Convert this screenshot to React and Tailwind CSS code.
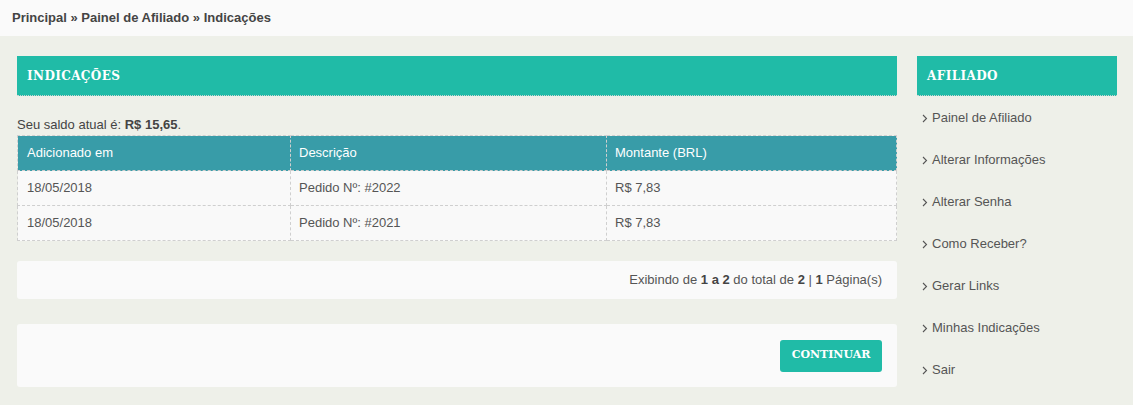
import React from "react";

const slab = { fontFamily: '"DejaVu Serif", serif', fontWeight: 700 };

const rows = [
    { date: "18/05/2018", desc: "Pedido Nº: #2022", amount: "R$ 7,83" },
    { date: "18/05/2018", desc: "Pedido Nº: #2021", amount: "R$ 7,83" },
];

const links = [
    "Painel de Afiliado",
    "Alterar Informações",
    "Alterar Senha",
    "Como Receber?",
    "Gerar Links",
    "Minhas Indicações",
    "Sair",
];

const Chevron = () => (
    <svg width="6" height="9" viewBox="0 0 6 9" className="mr-[4px] shrink-0">
        <path d="M1 1l3.5 3.5L1 8" fill="none" stroke="#555" strokeWidth="1.1" />
    </svg>
);

const PanelTitle = ({ children }) => (
    <div className="h-[40px] bg-[#20bba7] border-b border-dotted border-[#c9d4d2] flex items-center px-[10px]">
        <h2 className="text-white text-[12px] tracking-[0.4px] pt-[1px]" style={slab}>
            {children}
        </h2>
    </div>
);

export default function App() {
    return (
        <div
            className="min-h-[405px] bg-[#eef0e9] text-[#444] text-[13px]"
            style={{ fontFamily: '"Liberation Sans", Arial, sans-serif' }}
        >
            {/* Breadcrumb */}
            <div className="h-[36px] bg-[#fafafa] flex items-center px-[12px] font-bold text-[#444]">
                Principal » Painel de Afiliado » Indicações
            </div>

            <div className="flex gap-[20px] pl-[17px] pr-[16px] pt-[20px]">
                {/* Main column */}
                <div className="w-[880px] shrink-0">
                    <PanelTitle>INDICAÇÕES</PanelTitle>

                    <p className="mt-[21px] leading-[16px]">
                        Seu saldo atual é: <b>R$ 15,65</b>.
                    </p>

                    <table className="w-full border-collapse mt-[2px]">
                        <thead>
                            <tr className="bg-[#389ca8] text-white h-[35px]">
                                <th className="w-[273px] text-left font-normal px-[9px] border border-dashed border-[#cfcfcf]">Adicionado em</th>
                                <th className="w-[316px] text-left font-normal px-[8px] border border-dashed border-[#cfcfcf]">Descrição</th>
                                <th className="text-left font-normal px-[8px] border border-dashed border-[#cfcfcf]">Montante (BRL)</th>
                            </tr>
                        </thead>
                        <tbody>
                            {rows.map((r) => (
                                <tr key={r.desc} className="bg-[#f9f9f9] h-[35px] text-[#555]">
                                    <td className="px-[9px] border border-dashed border-[#cfcfcf]">{r.date}</td>
                                    <td className="px-[8px] border border-dashed border-[#cfcfcf]">{r.desc}</td>
                                    <td className="px-[8px] border border-dashed border-[#cfcfcf]">{r.amount}</td>
                                </tr>
                            ))}
                        </tbody>
                    </table>

                    {/* Pagination */}
                    <div className="mt-[20px] h-[38px] bg-[#fafafa] rounded-[3px] flex items-center justify-end px-[15px] text-[#555]">
                        <span>
                            Exibindo de <b className="text-[#444]">1 a 2</b> do total de <b className="text-[#444]">2</b> | <b className="text-[#444]">1</b> Página(s)
                        </span>
                    </div>

                    {/* Actions */}
                    <div className="mt-[25px] h-[63px] bg-[#fafafa] rounded-[3px] flex items-center justify-end px-[15px]">
                        <button
                            className="h-[32px] w-[102px] bg-[#20bba7] rounded-[3px] text-white text-[11px]"
                            style={slab}
                        >
                            CONTINUAR
                        </button>
                    </div>
                </div>

                {/* Sidebar */}
                <div className="w-[200px] shrink-0">
                    <PanelTitle>AFILIADO</PanelTitle>
                    <ul className="pt-[14px]">
                        {links.map((l) => (
                            <li key={l} className="h-[42px] flex items-start pl-[5px] text-[#555]">
                                <a href="#" className="flex items-center leading-[16px]">
                                    <Chevron />
                                    {l}
                                </a>
                            </li>
                        ))}
                    </ul>
                </div>
            </div>
        </div>
    );
}
